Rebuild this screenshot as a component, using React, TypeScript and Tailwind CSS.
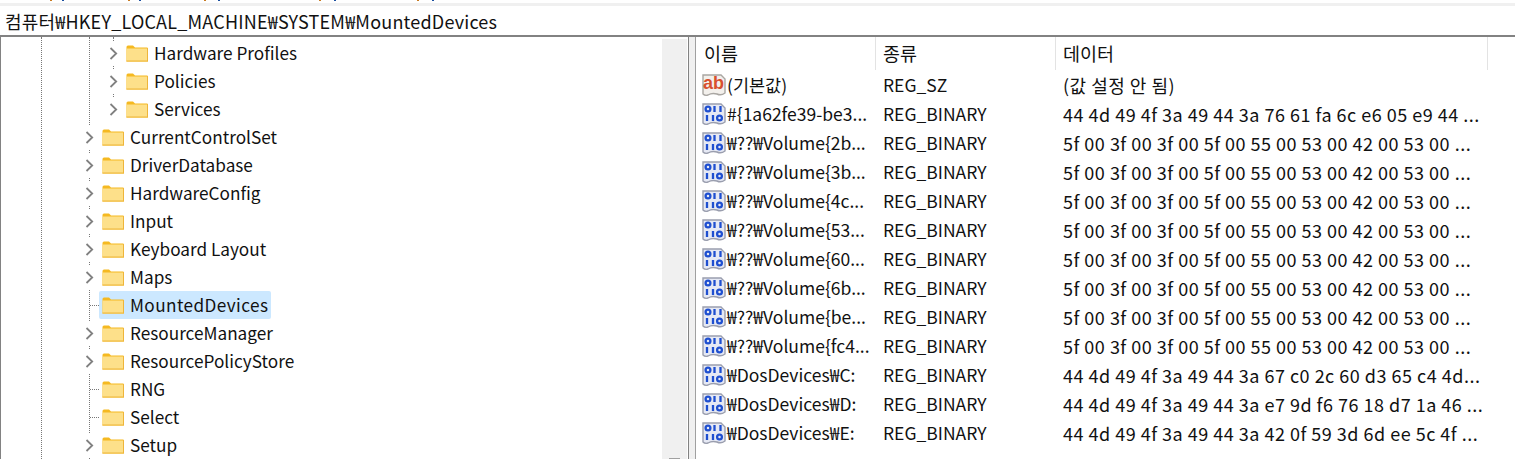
const font = "font-['Noto_Sans_CJK_KR','Noto_Sans',sans-serif]";

const treeRows = [
  { name: "Hardware Profiles", depth: 1, arrow: true },
  { name: "Policies", depth: 1, arrow: true },
  { name: "Services", depth: 1, arrow: true },
  { name: "CurrentControlSet", depth: 0, arrow: true },
  { name: "DriverDatabase", depth: 0, arrow: true },
  { name: "HardwareConfig", depth: 0, arrow: true },
  { name: "Input", depth: 0, arrow: true },
  { name: "Keyboard Layout", depth: 0, arrow: true },
  { name: "Maps", depth: 0, arrow: true },
  { name: "MountedDevices", depth: 0, arrow: false, selected: true },
  { name: "ResourceManager", depth: 0, arrow: true },
  { name: "ResourcePolicyStore", depth: 0, arrow: true },
  { name: "RNG", depth: 0, arrow: false },
  { name: "Select", depth: 0, arrow: false },
  { name: "Setup", depth: 0, arrow: true },
];

const usb = "5f 00 3f 00 3f 00 5f 00 55 00 53 00 42 00 53 00 ...";

const values = [
  { name: "(기본값)", type: "REG_SZ", data: "(값 설정 안 됨)", text: true },
  { name: "#{1a62fe39-be3...", type: "REG_BINARY", data: "44 4d 49 4f 3a 49 44 3a 76 61 fa 6c e6 05 e9 44 ..." },
  { name: "₩??₩Volume{2b...", type: "REG_BINARY", data: usb },
  { name: "₩??₩Volume{3b...", type: "REG_BINARY", data: usb },
  { name: "₩??₩Volume{4c...", type: "REG_BINARY", data: usb },
  { name: "₩??₩Volume{53...", type: "REG_BINARY", data: usb },
  { name: "₩??₩Volume{60...", type: "REG_BINARY", data: usb },
  { name: "₩??₩Volume{6b...", type: "REG_BINARY", data: usb },
  { name: "₩??₩Volume{be...", type: "REG_BINARY", data: usb },
  { name: "₩??₩Volume{fc4...", type: "REG_BINARY", data: usb },
  { name: "₩DosDevices₩C:", type: "REG_BINARY", data: "44 4d 49 4f 3a 49 44 3a 67 c0 2c 60 d3 65 c4 4d..." },
  { name: "₩DosDevices₩D:", type: "REG_BINARY", data: "44 4d 49 4f 3a 49 44 3a e7 9d f6 76 18 d7 1a 46 ..." },
  { name: "₩DosDevices₩E:", type: "REG_BINARY", data: "44 4d 49 4f 3a 49 44 3a 42 0f 59 3d 6d ee 5c 4f ..." },
];

const FolderIcon = () => (
  <svg width="22" height="17" viewBox="0 0 22 17" className="shrink-0">
    <path d="M0.5 2 Q0.5 0.5 2 0.5 H7 L9 2.5 H21.5 V16.5 H0.5 Z" fill="#f5b921" />
    <rect x="0.5" y="3.5" width="21" height="13" fill="#fde08a" />
    <rect x="0.5" y="15.5" width="21" height="1" fill="#eeb53a" />
    <rect x="21" y="3" width="1" height="13.5" fill="#eeb53a" />
  </svg>
);

const Chevron = () => (
  <div className="flex h-[24px] w-[9px] items-center bg-white">
    <svg width="9" height="13" viewBox="0 0 9 13" className="shrink-0">
      <path d="M1.5 1 L7.2 6.5 L1.5 12" fill="none" stroke="#808080" strokeWidth="1.8" />
    </svg>
  </div>
);

const StringIcon = () => (
  <svg width="24" height="23" viewBox="0 0 24 23" className="shrink-0">
    <path d="M1 1 H19 L23 5 V19 Q19 22 15 20 Q10 18.5 6 21 Q3 22 1 20 Z" fill="#f3f0ec" stroke="#a9a6a2" strokeWidth="1.4" />
    <text x="1" y="15" fontSize="18" fontWeight="700" fill="#d8502f" fontFamily="Liberation Sans, sans-serif">ab</text>
  </svg>
);

const BinaryIcon = () => (
  <svg width="24" height="23" viewBox="0 0 24 23" className="shrink-0">
    <path d="M1 1 H19 L23 5 V19 Q19 22 15 20 Q10 18.5 6 21 Q3 22 1 20 Z" fill="#e6e9f4" stroke="#9a9eae" strokeWidth="1.4" />
    <g fill="none" stroke="#1f4fd0" strokeWidth="2.3">
      <circle cx="6" cy="6" r="2.4" />
      <path d="M12.5 3 V9 M18.5 3 V9" />
      <path d="M5 12 V18 M11 12 V18" />
      <circle cx="17.5" cy="15" r="2.4" />
    </g>
  </svg>
);

const TreeRow = ({ row }: { row: (typeof treeRows)[number] }) => {
  return (
    <div className={`relative flex h-7 items-center ${row.depth === 1 ? "pl-[108px]" : "pl-[84px]"}`}>
      <div className="flex w-[14px] items-center">
        {row.arrow ? (
          <Chevron />
        ) : (
          <div className="ml-[5px] w-[9px] border-t border-dotted border-[#777]" />
        )}
      </div>
      <div className={`flex h-7 items-center rounded-[2px] pl-[3px] pr-[3px] ${row.selected ? "bg-[#cce8ff]" : ""}`}>
        <FolderIcon />
        <span className={`ml-[6px] text-[17.2px] leading-7 text-[#111] ${row.selected ? "tracking-[0.4px]" : ""}`}>
          {row.name}
        </span>
      </div>
    </div>
  );
};

const ValueRow = ({ row }: { row: (typeof values)[number] }) => {
  return (
    <div className="flex h-[29px] items-center text-[17.5px] text-[#111]">
      <div className="flex w-[182px] items-center gap-[1px] pl-[6px]">
        {row.text ? <StringIcon /> : <BinaryIcon />}
        <span className="whitespace-nowrap">{row.name}</span>
      </div>
      <div className="w-[185px] whitespace-nowrap pl-[5px]">{row.type}</div>
      <div className="whitespace-nowrap text-[18px] tracking-[0.5px]">{row.data}</div>
    </div>
  );
};

// bottoms of the menu bar's brackets, all that is left of it in the crop
const MenuCut = () => (
  <div className="flex h-[3px] shrink-0 items-start bg-white">
    <div className="ml-[50px] h-[1px] w-[2px] bg-[#c87a20]" />
    <div className="ml-[10px] h-[1px] w-[2px] bg-[#1a4fa0]" />
    <div className="ml-[64px] h-[1px] w-[2px] bg-[#c87a20]" />
    <div className="ml-[9px] h-[1px] w-[2px] bg-[#1a4fa0]" />
    <div className="ml-[63px] h-[1px] w-[2px] bg-[#c87a20]" />
    <div className="ml-[12px] h-[1px] w-[2px] bg-[#1a4fa0]" />
    <div className="ml-[99px] h-[1px] w-[2px] bg-[#c87a20]" />
    <div className="ml-[13px] h-[1px] w-[2px] bg-[#1a4fa0]" />
    <div className="ml-[81px] h-[1px] w-[2px] bg-[#c87a20]" />
    <div className="ml-[13px] h-[1px] w-[2px] bg-[#1a4fa0]" />
  </div>
);

export default function App() {
  return (
    <div className={`flex h-[459px] w-[1515px] flex-col overflow-hidden bg-white ${font}`}>
      <MenuCut />
      <div className="h-[3px] shrink-0 bg-[#f0f0f0]" />
      <div className="flex h-[29px] shrink-0 items-center whitespace-nowrap pl-[5px] pt-[1px] text-[18px] tracking-[0.2px] text-[#111]">
        컴퓨터₩HKEY_LOCAL_MACHINE₩SYSTEM₩MountedDevices
      </div>
      <div className="h-[2px] shrink-0 bg-[#828282]" />
      <div className="flex min-h-0 flex-1">
        <div className="w-[1px] bg-[#828282]" />
        <div className="relative w-[661px] overflow-hidden pt-[2px]">
          <div className="absolute bottom-0 left-[40px] top-0 border-l border-dotted border-[#777]" />
          <div className="absolute bottom-0 left-[88px] top-0 border-l border-dotted border-[#777]" />
          <div className="absolute left-[112px] top-0 h-[84px] border-l border-dotted border-[#777]" />
          {treeRows.map((row) => (
            <TreeRow row={row} key={row.name} />
          ))}
        </div>
        <div className="relative mt-[2px] w-[25px] bg-[#f0f0f0]">
          <div className="absolute bottom-0 left-[7px] h-[1px] w-[11px] bg-[#a0a0a0]" />
        </div>
        <div className="w-[1px]" />
        <div className="w-[1px] bg-[#828282]" />
        <div className="w-[6px] bg-[#f0f0f0]" />
        <div className="w-[1px] bg-[#a0a0a0]" />
        <div className="min-w-0 flex-1">
          <div className="flex h-[33px] items-center text-[18.5px] text-[#111]">
            <div className="flex h-full w-[180px] items-center border-r border-[#e3e3e3] pl-[8px]">이름</div>
            <div className="flex h-full w-[180px] items-center border-r border-[#e3e3e3] pl-[7px]">종류</div>
            <div className="flex h-full w-[432px] items-center border-r border-[#e3e3e3] pl-[7px]">데이터</div>
          </div>
          <div className="pt-[1px]">
            {values.map((row) => (
              <ValueRow row={row} key={row.name} />
            ))}
          </div>
        </div>
      </div>
    </div>
  );
}
